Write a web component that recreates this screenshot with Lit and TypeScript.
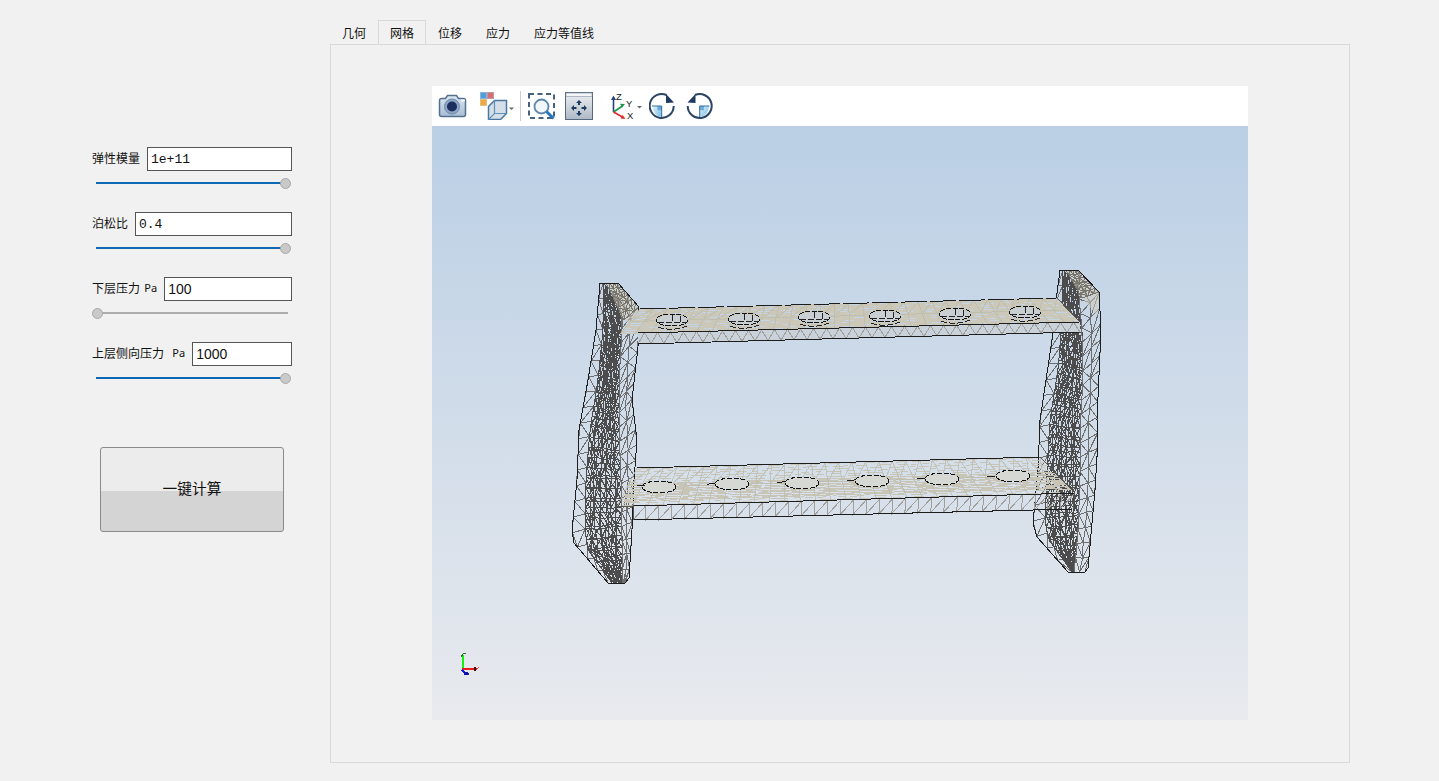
import { LitElement, html, css, svg } from "lit";
import { customElement } from "lit/decorators.js";

type P = [number, number];

function makeRng(seed: number) {
  let s = seed;
  return () => {
    s = (s * 1664525 + 1013904223) % 4294967296;
    return s / 4294967296;
  };
}

function along(poly: P[], t: number): P {
  const lens: number[] = [];
  let total = 0;
  for (let i = 1; i < poly.length; i++) {
    const l = Math.hypot(poly[i][0] - poly[i - 1][0], poly[i][1] - poly[i - 1][1]);
    lens.push(l);
    total += l;
  }
  let d = t * total;
  for (let i = 0; i < lens.length; i++) {
    if (d <= lens[i] || i === lens.length - 1) {
      const f = lens[i] ? d / lens[i] : 0;
      return [poly[i][0] + (poly[i + 1][0] - poly[i][0]) * f, poly[i][1] + (poly[i + 1][1] - poly[i][1]) * f];
    }
    d -= lens[i];
  }
  return poly[poly.length - 1];
}

const fmt = (p: P) => `${p[0].toFixed(1)} ${p[1].toFixed(1)}`;
const pts = (a: P[]) => a.map((p) => `${p[0]},${p[1]}`).join(" ");

function strip(a: P[], b: P[], nu: number, nv: number, jit: number, seed: number) {
  const r = makeRng(seed);
  const g: P[][] = [];
  for (let i = 0; i <= nv; i++) {
    const t = i / nv;
    const l = along(a, t);
    const q = along(b, t);
    const row: P[] = [];
    for (let j = 0; j <= nu; j++) {
      const f = j / nu;
      const edge = j === 0 || j === nu || i === 0 || i === nv;
      const jx = edge ? 0 : (r() - 0.5) * jit;
      const jy = edge ? 0 : (r() - 0.5) * jit;
      row.push([l[0] + (q[0] - l[0]) * f + jx, l[1] + (q[1] - l[1]) * f + jy]);
    }
    g.push(row);
  }
  let d = "";
  for (let i = 0; i <= nv; i++) d += "M" + g[i].map(fmt).join("L");
  for (let j = 0; j <= nu; j++) d += "M" + g.map((row) => fmt(row[j])).join("L");
  for (let i = 0; i < nv; i++)
    for (let j = 0; j < nu; j++) {
      d += r() > 0.5 ? `M${fmt(g[i][j])}L${fmt(g[i + 1][j + 1])}` : `M${fmt(g[i][j + 1])}L${fmt(g[i + 1][j])}`;
    }
  return d;
}

function quadAt(q: P[], u: number, v: number): P {
  const [bl, br, fr, fl] = q;
  const tx = bl[0] + (br[0] - bl[0]) * u, ty = bl[1] + (br[1] - bl[1]) * u;
  const bx = fl[0] + (fr[0] - fl[0]) * u, by = fl[1] + (fr[1] - fl[1]) * u;
  return [tx + (bx - tx) * v, ty + (by - ty) * v];
}

function streaks(q: P[], rows: number, v0: number, v1: number, seed: number, dash: number, gap: number) {
  const r = makeRng(seed);
  let d = "";
  for (let i = 0; i <= rows; i++) {
    const v = v0 + ((v1 - v0) * i) / rows;
    let u = r() * 0.01;
    while (u < 1) {
      const e = Math.min(1, u + ((0.4 + r()) * dash) / 420);
      d += `M${fmt(quadAt(q, u, v))}L${fmt(quadAt(q, e, v))}`;
      u = e + ((0.4 + r()) * gap) / 420;
    }
  }
  return d;
}

function crossLines(q: P[], n: number) {
  let d = "";
  for (let i = 0; i <= n; i++) {
    const u = i / n;
    d += `M${fmt(quadAt(q, u, 0))}L${fmt(quadAt(q, u, 1))}`;
    if (i < n) d += `M${fmt(quadAt(q, u + 1 / n, 0))}L${fmt(quadAt(q, u, 0.5))}`;
  }
  d += `M${fmt(quadAt(q, 0, 0.5))}L${fmt(quadAt(q, 1, 0.5))}`;
  return d;
}

function zigzag(q: P[], n: number) {
  let d = "";
  for (let i = 0; i < n; i++) {
    const u0 = i / n, u1 = (i + 1) / n, um = (u0 + u1) / 2;
    d += `M${fmt(quadAt(q, u0, 1))}L${fmt(quadAt(q, um, 0))}L${fmt(quadAt(q, u1, 1))}`;
  }
  return d;
}

function sawtooth(q: P[], n: number) {
  let d = "";
  for (let i = 0; i < n; i++) {
    const u0 = i / n, u1 = (i + 1) / n;
    d += `M${fmt(quadAt(q, u0, 0))}L${fmt(quadAt(q, u0, 1))}L${fmt(quadAt(q, u1, 0))}`;
  }
  return d;
}

const poly = (a: P[]) => "M" + a.map(fmt).join("L");

/* left side plate */
const L0: P[] = [[600, 283], [596, 330], [588, 380], [579, 430], [577, 480], [572, 530], [574, 543], [608, 583]];
const L1: P[] = [[603, 283], [603, 330], [598, 380], [590, 430], [586, 480], [585, 530], [588, 550], [612, 583]];
const L2: P[] = [[620, 300], [622, 330], [619, 380], [619, 430], [621, 480], [622, 530], [622, 560], [623, 583]];
const L3: P[] = [[618, 283], [639, 307], [638, 347], [632, 400], [637, 440], [634, 480], [632, 530], [629, 578], [625, 583]];
/* right side plate */
const R0: P[] = [[1060, 270], [1057, 293], [1052, 340], [1040, 420], [1038, 470], [1033, 523], [1037, 537], [1068, 572]];
const R1: P[] = [[1063, 270], [1062, 320], [1058, 370], [1050, 420], [1047, 470], [1045, 523], [1049, 540], [1072, 572]];
const R2: P[] = [[1078, 285], [1082, 330], [1083, 380], [1080, 430], [1080, 480], [1078, 530], [1076, 555], [1074, 572]];
const R3: P[] = [[1078, 270], [1099, 292], [1101, 330], [1097, 420], [1098, 440], [1095, 490], [1088, 568], [1085, 572]];

/* shelves: back-left, back-right, front-right, front-left */
const UT: P[] = [[640, 309], [1057, 298], [1080, 322], [620, 334]];
const UF: P[] = [[638, 333], [1080, 322], [1080, 332], [638, 344]];
const LT: P[] = [[637, 468], [1040, 457], [1075, 493], [617, 507]];
const LF: P[] = [[633, 506], [1075, 493], [1073, 509], [633, 520]];

const holesUp: P[] = [[672, 321], [744, 320], [814, 318], [885, 317], [955, 315], [1025, 313]];
const holesLow: P[] = [[659, 487], [732, 484], [802, 483], [872, 481], [942, 479], [1013, 476]];

function buildMesh() {
  return svg`
    <path class="mid" d=${strip(L0, L1, 1, 20, 1, 3)}></path>
    <path class="dark" d=${strip(L1, L2, 7, 30, 2.5, 5)}></path>
    <path class="dark" d=${strip(L1, L2, 5, 24, 3, 15)}></path>
    <path class="mid" d=${strip(L2, L3, 2, 20, 1.5, 7)}></path>
    <polygon class="cap" points="606,283 618,283 639,307 637,330 622,318"></polygon>
    <path class="midthin" d=${strip([[606, 283], [624, 320]], [[618, 283], [639, 307]], 3, 6, 0.5, 21)}></path>
    <path class="mid" d=${strip(R0, R1, 1, 20, 1, 9)}></path>
    <path class="dark" d=${strip(R1, R2, 7, 30, 2.5, 11)}></path>
    <path class="dark" d=${strip(R1, R2, 5, 24, 3, 19)}></path>
    <path class="mid" d=${strip(R2, R3, 2, 20, 1.5, 13)}></path>
    <polygon class="cap" points="1066,270 1078,270 1099,292 1098,316 1082,298"></polygon>
    <path class="midthin" d=${strip([[1066, 270], [1082, 298]], [[1078, 270], [1099, 292]], 3, 6, 0.5, 23)}></path>
    <path class="edge" d=${poly([...L0, ...[...L3].reverse(), L0[0]])}></path>
    <path class="edge" d=${poly([...R0, ...[...R3].reverse(), R0[0]])}></path>

    <polygon class="beige" points=${pts(UT)}></polygon>
    <path class="flecks" d=${streaks(UT, 10, 0.05, 0.95, 31, 10, 20)}></path>
    <path class="grid" d=${crossLines(UT, 30)}></path>
    <polygon class="beigeFront" points=${pts(UF)}></polygon>
    <path class="zig" d=${zigzag(UF, 34)}></path>

    <path class="tan" d=${streaks(LT, 14, 0.03, 0.97, 41, 12, 8)}></path>
    <path class="tan" d=${streaks(LT, 10, 0.42, 0.86, 43, 24, 4)}></path>
    <path class="grid" d=${crossLines(LT, 30)}></path>
    <path class="zig" d=${sawtooth(LF, 34)}></path>

    ${holesUp.map(
      ([x, y]) => svg`
        <ellipse class="holeFill" cx=${x} cy=${y} rx="16" ry="6"></ellipse>
        <ellipse class="hole" cx=${x} cy=${y - 1} rx="16" ry="6"></ellipse>
        <path class="holeIn" d="M${x - 14} ${y + 1}H${x + 14}M${x} ${y - 6}V${y + 2}M${x + 8} ${y - 5}V${y + 1}M${x - 14} ${y + 6}Q${x} ${y + 11} ${x + 15} ${y + 5}"></path>
      `
    )}
    ${holesLow.map(
      ([x, y]) => svg`
        <ellipse class="holeLow" cx=${x} cy=${y} rx="17" ry="6"></ellipse>
        <ellipse class="hole" cx=${x} cy=${y} rx="17" ry="6"></ellipse>
      `
    )}

    <path class="edgeDash" d=${poly([UT[0], UT[1]])}></path>
    <path class="edge" d=${poly([[638, 333], [1080, 322]])}></path>
    <path class="edge" d=${poly([[638, 344], [1080, 332]])}></path>
    <path class="edgeThin" d=${poly([UT[1], UT[2]])}></path>
    <path class="edge" d=${poly([LT[0], LT[1]])}></path>
    <path class="edgeThin" d=${poly([LT[1], LT[2], LF[2]])}></path>
    <path class="edge" d=${poly([LF[0], LF[1]])}></path>
    <path class="edge" d=${poly([LF[3], LF[2]])}></path>
    <path class="edgeGap" d=${poly([[637, 486], [1036, 475]])}></path>
    <path class="edgeThin" d=${poly([LT[3], LF[0], LF[3]])}></path>

    <path class="axG" d="M462.5 669V655"></path>
    <path class="axGt" d="M461 657l2-3 3-1"></path>
    <path class="axR" d="M462 669H477"></path>
    <path class="axK" d="M474.5 667v4"></path>
    <path class="axRt" d="M477 669l2-2"></path>
    <path class="axB" d="M462 670l4 4h3"></path>
    <rect class="axBf" x="464" y="672" width="4" height="3"></rect>
  `;
}

const meshContent = buildMesh();

interface Param {
  label: string;
  unit?: string;
  unitClass?: string;
  value: string;
  mono: boolean;
  on: boolean;
}

const PARAMS: Param[] = [
  { label: "弹性模量", value: "1e+11", mono: true, on: true },
  { label: "泊松比", value: "0.4", mono: true, on: true },
  { label: "下层压力", unit: "Pa", unitClass: "u1", value: "100", mono: false, on: false },
  { label: "上层侧向压力", unit: "Pa", unitClass: "u2", value: "1000", mono: false, on: true },
];

const TABS = ["几何", "网格", "位移", "应力", "应力等值线"];

@customElement("app-root")
export class AppRoot extends LitElement {
  static styles = css`
    :host { display: block; width: 1439px; height: 781px; overflow: hidden; background: #f1f1f1; font-family: "Noto Sans CJK SC", "Liberation Sans", sans-serif; color: #111; }
    .page { display: flex; height: 781px; }
    .side { width: 200px; padding: 147px 38px 0 92px; flex: none; }
    .field { height: 24px; display: flex; align-items: center; gap: 7px; }
    .label { font-size: 12px; line-height: 22px; white-space: nowrap; display: flex; padding-bottom: 2px; }
    .unit { font-family: "Noto Sans", sans-serif; font-size: 11px; }
    .u1 { margin-left: 4.3px; }
    .u2 { margin-left: 8.3px; }
    .input { flex: 1; min-width: 0; height: 24px; box-sizing: border-box; border: 1px solid #555; background: #fff; padding: 0 3px; line-height: 23px; font-size: 13px; white-space: pre; }
    .mono { font-family: "Liberation Mono", monospace; }
    .num { font-family: "Liberation Sans", sans-serif; font-size: 14px; }
    .slider { height: 24px; margin-bottom: 17px; padding: 0 4px; display: flex; align-items: center; position: relative; }
    .track { flex: 1; height: 2px; background: #acacac; }
    .on { background: #0f68b4; margin-right: 3px; }
    .knob { position: absolute; top: 6.5px; width: 9px; height: 9px; border-radius: 50%; background: #c9c9c9; border: 1px solid #a9a9a9; }
    .knob.max { right: 1px; }
    .knob.min { left: 0; }
    .btn { margin: 57px 0 0 8px; width: 184px; height: 85px; box-sizing: border-box; border: 1px solid #8b8b8b; border-radius: 3px; background: linear-gradient(#ececec 0, #ececec 52%, #d4d4d4 52%, #d4d4d4 100%); display: flex; align-items: center; justify-content: center; font-size: 14.7px; padding-bottom: 4px; }
    .main { width: 1020px; padding-top: 20px; flex: none; }
    .tabs { display: flex; height: 24px; }
    .tab { padding: 0 11px; font-size: 12px; line-height: 24px; box-sizing: border-box; height: 24px; border: 1px solid transparent; border-bottom: none; }
    .active { border-color: #d9d9d9; }
    .panel { height: 719px; box-sizing: border-box; border: 1px solid #d9d9d9; padding: 41px 0 0 101px; }
    .viewer { width: 816px; height: 634px; display: flex; flex-direction: column; }
    .toolbar { height: 40px; background: #fff; display: flex; align-items: center; flex: none; }
    .toolbar svg { display: block; flex: none; }
    .i-cam { margin-left: 6px; }
    .i-pal { margin-left: 12px; }
    .sep { width: 1px; height: 30px; background: #cfcfcf; margin-left: 6px; flex: none; }
    .i-zoom { margin-left: 7px; }
    .i-pan { margin-left: 9px; }
    .i-ax { margin-left: 18px; }
    .i-r1 { margin-left: 6px; }
    .i-r2 { margin-left: 10px; }
    .canvas { flex: 1; background: linear-gradient(#bacfe5, #e8eaee); position: relative; }
    .canvas svg { position: absolute; inset: 0; display: block; }
    .canvas svg path, .canvas svg ellipse { fill: none; }
    .dark { stroke: #4c4c4c; stroke-width: 1; }
    .mid { stroke: #6e6e6e; stroke-width: 1; }
    .midthin { stroke: #77756c; stroke-width: 1; }
    .cap { fill: #cdcabb; fill-opacity: .55; }
    .edge { stroke: #1d1d1d; stroke-width: 1; }
    .edgeThin { stroke: #55554e; stroke-width: 1; }
    .edgeDash { stroke: #1d1d1d; stroke-width: 1; stroke-dasharray: 26 3; }
    .edgeGap { stroke: #1d1d1d; stroke-width: 1; stroke-dasharray: 8 62; }
    .beige { fill: #cbc8b9; }
    .beigeFront { fill: #c9d2da; }
    .flecks { stroke: #c4d4e6; stroke-width: 1; }
    .tan { stroke: #c8c5b6; stroke-width: 1; }
    .grid { stroke: #bdbbad; stroke-width: 1; opacity: .8; }
    .zig { stroke: #a09f9a; stroke-width: 1; }
    .canvas svg ellipse.holeFill { fill: #c9cfd2; }
    .canvas svg ellipse.holeLow { fill: #d6d8d4; }
    .hole { stroke: #111; stroke-width: 1; stroke-dasharray: 5 1.5; }
    .holeIn { stroke: #222; stroke-width: 1; stroke-dasharray: 6 2; }
    .axG { stroke: #12f012; stroke-width: 2; }
    .axGt { stroke: #2a6a2a; stroke-width: 1; }
    .axR { stroke: #ee1a1a; stroke-width: 2; }
    .axK { stroke: #401010; stroke-width: 2; }
    .axRt { stroke: #ee3a3a; stroke-width: 1; }
    .axB { stroke: #1a1ae0; stroke-width: 1.5; }
    .axBf { fill: #1010b0; }
    .ti { font-family: "Liberation Sans", sans-serif; font-size: 9.5px; fill: #222; }
  `;

  private icons() {
    return html`
      <svg class="i-cam" width="30" height="26" viewBox="0 0 30 26">
        <defs>
          <linearGradient id="cg" x1="0" y1="0" x2="0" y2="1"><stop offset="0" stop-color="#dbe6f2"></stop><stop offset="1" stop-color="#a9bdd5"></stop></linearGradient>
          <linearGradient id="pg" x1="0" y1="0" x2="0" y2="1"><stop offset="0" stop-color="#eef1f4"></stop><stop offset="1" stop-color="#aeb9c6"></stop></linearGradient>
          <linearGradient id="qg" x1="0" y1="0" x2="1" y2="1"><stop offset="0" stop-color="#e6f4fb"></stop><stop offset="1" stop-color="#6fbbe6"></stop></linearGradient>
        </defs>
        <path d="M1.5 7.5a2 2 0 0 1 2-2h4l2-3h9l2 3h5a2 2 0 0 1 2 2v14a2 2 0 0 1-2 2h-22a2 2 0 0 1-2-2z" fill="url(#cg)" stroke="#56708f" stroke-width="1.5"></path>
        <circle cx="14" cy="13.5" r="7.5" fill="#8ea6c4" stroke="#6e88a8"></circle>
        <circle cx="14" cy="13.5" r="5" fill="#1c2f60"></circle>
        <rect x="23" y="6.5" width="4" height="2" fill="#f4f7fa"></rect>
      </svg>
      <svg class="i-pal" width="34" height="28" viewBox="0 0 34 28">
        <rect x="0.5" y="0.5" width="6" height="6" fill="#4f9fdc" stroke="#8bb6d8"></rect>
        <rect x="7.5" y="0.5" width="6" height="6" fill="#d96e72" stroke="#b99aa0"></rect>
        <rect x="0.5" y="7.5" width="6" height="6" fill="#f0a93f" stroke="#e0c08a"></rect>
        <path d="M8.5 14.5l6-6h12v13l-6 6h-12z" fill="#d6dee7" stroke="#48779f" stroke-width="1.5"></path>
        <path d="M8.5 27.5l6-6h12M14.5 8.5v13" fill="none" stroke="#5e91bb" stroke-width="1.2"></path>
        <path d="M29 15.5h5l-2.5 2.5z" fill="#666"></path>
      </svg>
      <div class="sep"></div>
      <svg class="i-zoom" width="28" height="27" viewBox="0 0 28 27">
        <rect x="1" y="1" width="25" height="24" fill="none" stroke="#46607f" stroke-width="2" stroke-dasharray="5 3.5"></rect>
        <circle cx="13.5" cy="13.5" r="7" fill="#f2f7fb" stroke="#5d86ad" stroke-width="1.8"></circle>
        <path d="M18.5 18.5l7 7" stroke="#2478bd" stroke-width="3" fill="none"></path>
      </svg>
      <svg class="i-pan" width="28" height="28" viewBox="0 0 28 28">
        <rect x="0.5" y="0.5" width="27" height="27" fill="url(#pg)" stroke="#56687d"></rect>
        <rect x="1" y="1" width="26" height="3.5" fill="#f4f6f8" stroke="#8392a3" stroke-width="0.6"></rect>
        <path d="M14 8l-3 3h2v2h2v-2h2zM14 24l-3-3h2v-2h2v2h2zM6 16l3-3v2h2.5v2H9v2zM22 16l-3-3v2h-2.5v2H19v2z" fill="#1d3a61"></path>
      </svg>
      <svg class="i-ax" width="32" height="28" viewBox="0 0 32 28">
        <path d="M2.5 20V7" stroke="#27427e" stroke-width="1.6" fill="none"></path>
        <path d="M2.5 3.5L0 8h5z" fill="#27427e"></path>
        <path d="M2.5 20l9-6" stroke="#18994a" stroke-width="1.6" fill="none"></path>
        <path d="M14 12l-5-.2 2 3.8z" fill="#18994a"></path>
        <path d="M2.5 20l9 5" stroke="#e02a2a" stroke-width="1.6" fill="none"></path>
        <path d="M14.5 27l-5-.4 2.2-3.6z" fill="#e02a2a"></path>
        <text class="ti" x="5" y="8">Z</text>
        <text class="ti" x="15" y="15">Y</text>
        <text class="ti" x="16" y="27">X</text>
        <path d="M26 14h5l-2.5 2.5z" fill="#666"></path>
      </svg>
      <svg class="i-r1" width="27" height="28" viewBox="0 0 27 28">
        <path d="M3.5 14h9.2v11A10.5 10.5 0 0 1 3.5 14z" fill="url(#qg)"></path>
        <rect x="8.5" y="14" width="4.2" height="4.2" fill="#4d93c9" opacity=".7"></rect>
        <path d="M17.5 3A12 12 0 1 0 24.7 14" fill="none" stroke="#2b4566" stroke-width="2"></path>
        <path d="M3 14h9.7v11" stroke="#2f6f9f" stroke-width="1" fill="none"></path>
        <path d="M17 2l8 8.5-8 .5z" fill="#1d3a61"></path>
      </svg>
      <svg class="i-r2" width="27" height="28" viewBox="0 0 27 28">
        <path d="M13.7 14h9.2A10.5 10.5 0 0 1 13.7 25z" fill="url(#qg)"></path>
        <rect x="13.7" y="14" width="4.2" height="4.2" fill="#4d93c9" opacity=".7"></rect>
        <path d="M9 3A12 12 0 1 1 1.7 14" fill="none" stroke="#2b4566" stroke-width="2"></path>
        <path d="M13.7 25V14h9.7" stroke="#2f6f9f" stroke-width="1" fill="none"></path>
        <path d="M9.5 2L1.5 10.5l8 .5z" fill="#1d3a61"></path>
      </svg>
    `;
  }

  render() {
    return html`
      <div class="page">
        <div class="side">
          ${PARAMS.map(
            (p) => html`
              <div class="field">
                <div class="label">
                  <span>${p.label}</span>
                  ${p.unit ? html`<span class="unit ${p.unitClass}">${p.unit}</span>` : ""}
                </div>
                <div class="input ${p.mono ? "mono" : "num"}">${p.value}</div>
              </div>
              <div class="slider">
                <div class="track ${p.on ? "on" : ""}"></div>
                <div class="knob ${p.on ? "max" : "min"}"></div>
              </div>
            `
          )}
          <div class="btn">一键计算</div>
        </div>
        <div class="main">
          <div class="tabs">
            ${TABS.map((t, i) => html`<div class="tab ${i === 1 ? "active" : ""}">${t}</div>`)}
          </div>
          <div class="panel">
            <div class="viewer">
              <div class="toolbar">${this.icons()}</div>
              <div class="canvas">
                <svg width="816" height="594" viewBox="432 126 816 594" shape-rendering="crispEdges">${meshContent}</svg>
              </div>
            </div>
          </div>
        </div>
      </div>
    `;
  }
}
